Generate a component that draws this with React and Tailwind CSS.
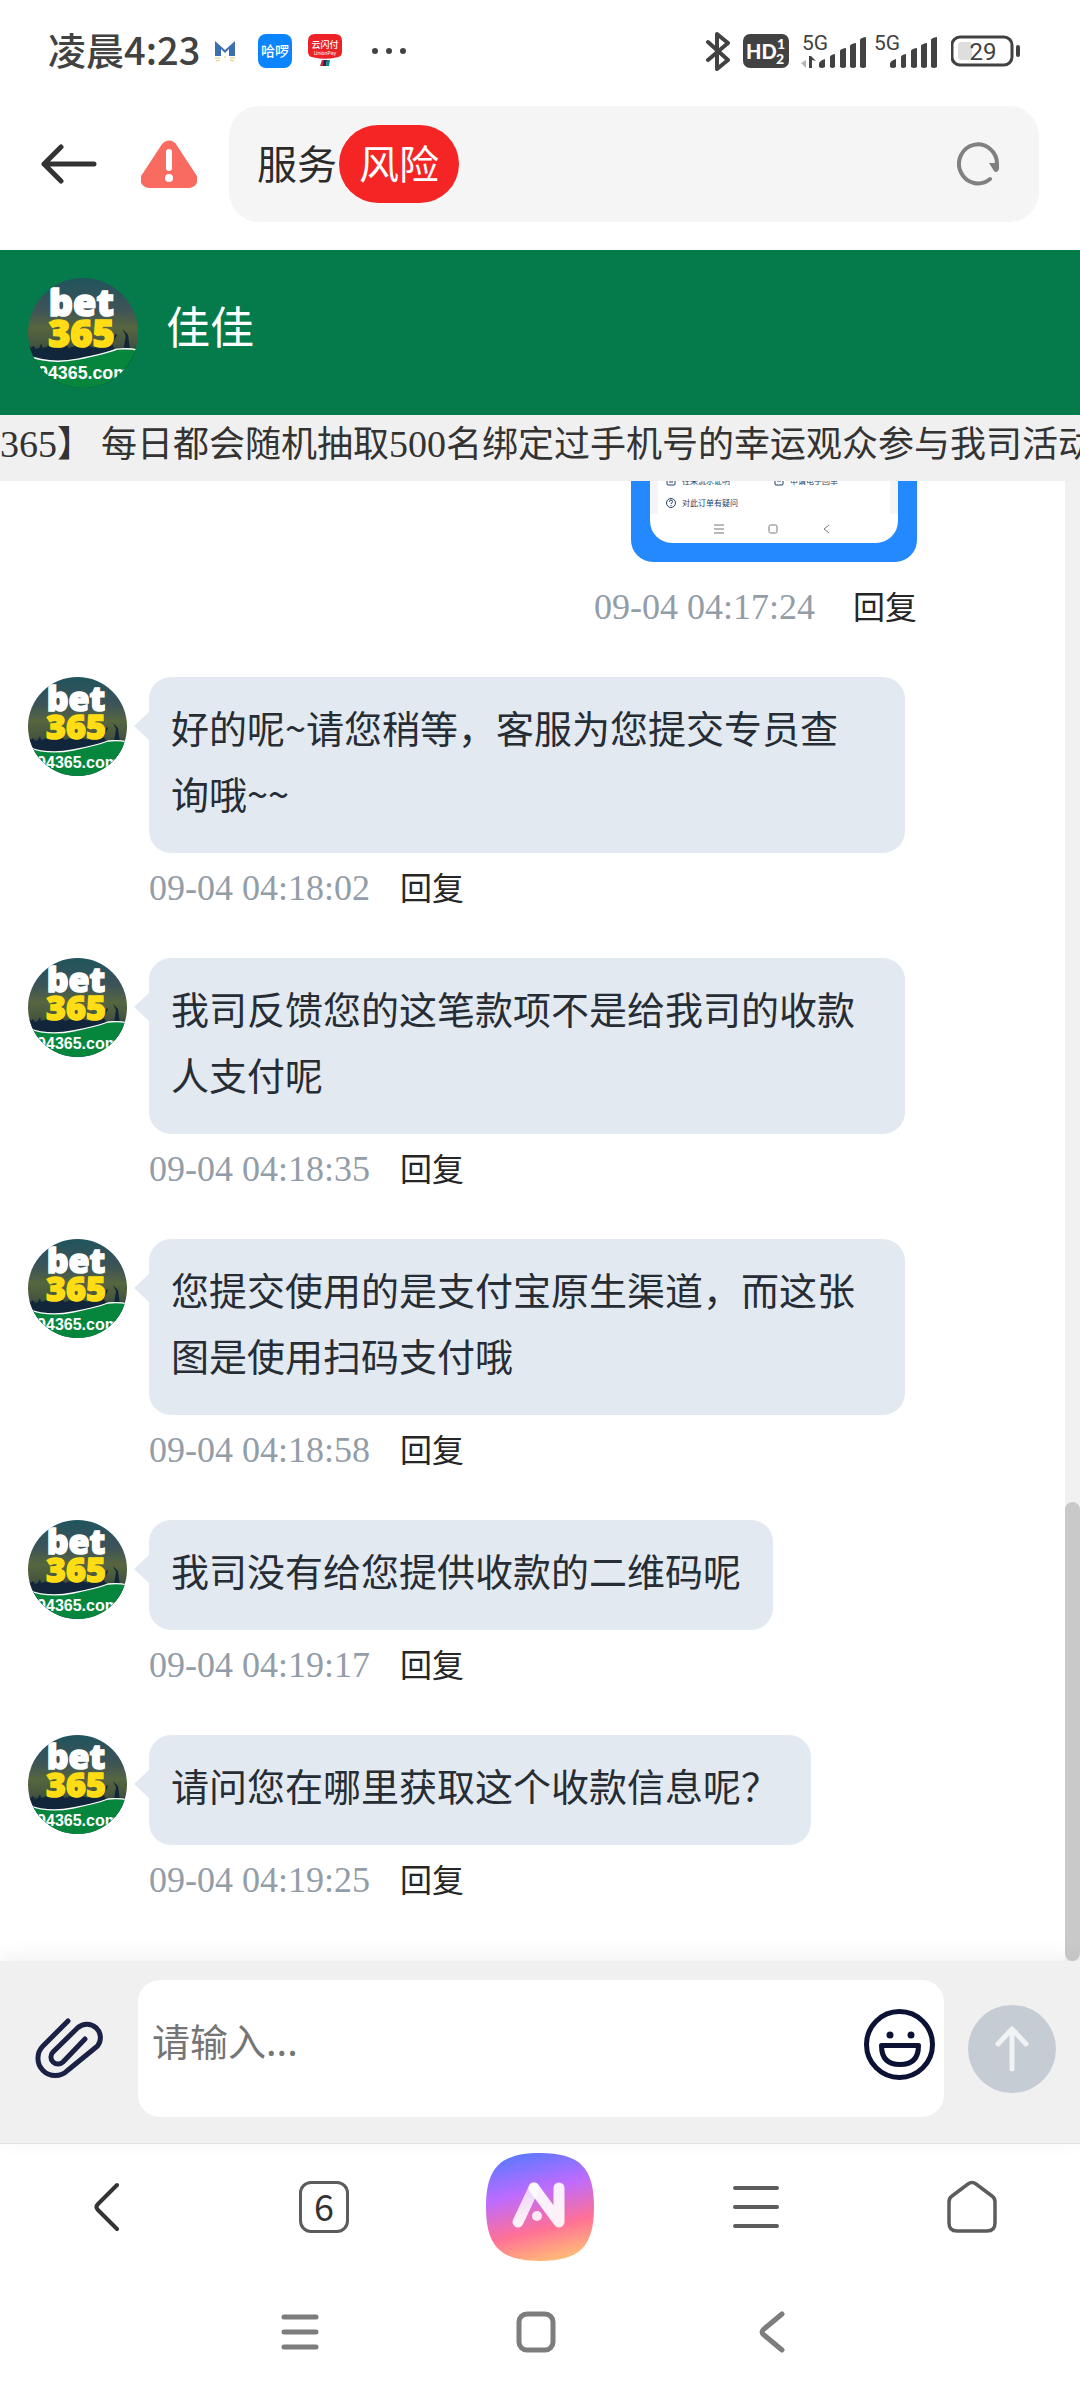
import { useState } from 'react';
import clsx from 'clsx';

const MESSAGES = [
  { id: 1, time: '09-04 04:18:02', text: '好的呢~请您稍等，客服为您提交专员查询哦~~' },
  { id: 2, time: '09-04 04:18:35', text: '我司反馈您的这笔款项不是给我司的收款人支付呢' },
  { id: 3, time: '09-04 04:18:58', text: '您提交使用的是支付宝原生渠道，而这张图是使用扫码支付哦' },
  { id: 4, time: '09-04 04:19:17', text: '我司没有给您提供收款的二维码呢' },
  { id: 5, time: '09-04 04:19:25', text: '请问您在哪里获取这个收款信息呢？' },
];

const SIGNAL_BARS = [
  'M0 30v-3q0-3 6-5v8q-3 2-6 0z',
  'M11 30V20q0-2 5-3v13q-3 2-5 0z',
  'M21 30V14q0-2 6-3v19q-3 2-6 0z',
  'M31 30V9q0-2 6-3v24q-3 2-6 0z',
  'M41 30V3q0-2 6-3v30q-3 2-6 0z',
];

function Signal({ data }) {
  return (
    <svg width={data ? 67 : 63} height="40" viewBox={data ? '0 -4 67 40' : '0 -4 63 40'} fill="#424242">
      <text x={data ? 2 : 0} y="15" fontSize="21" fontFamily="Roboto, sans-serif">5G</text>
      {data && <path d="M6 33l-5-5 5-3z" fill="#b5b5b5" />}
      {data && <path d="M9 21v12h3v-8l4 1-5-5z" />}
      <g transform={data ? 'translate(19 2)' : 'translate(16 2)'}>
        {SIGNAL_BARS.map((d) => <path key={d} d={d} />)}
      </g>
    </svg>
  );
}

function StatusBar() {
  return (
    <div className="flex h-[102px] items-center justify-between pr-[59px] pl-12 text-[#424242]">
      <div className="flex items-center">
        <span className="pb-1 text-[38px] leading-none font-medium">凌晨4:23</span>
        <svg className="ml-[14px]" width="22" height="22" viewBox="0 0 22 22">
          <path d="M1 16V1l10 9 10-9v15h-6V9l-4 4-4-4v7z" fill="#3b6fb0" />
          <path d="M1 18h5M16 18h5M2 21l4-1M20 21l-4-1M10 17h2" stroke="#e3c766" />
        </svg>
        <svg className="ml-[22px]" width="34" height="34" viewBox="0 0 34 34">
          <rect width="34" height="34" rx="8" fill="#0b84ff" />
          <text x="17" y="22" textAnchor="middle" fontSize="14" fontWeight="500" fill="#fff" fontFamily="Noto Sans CJK SC, sans-serif">哈啰</text>
        </svg>
        <svg className="ml-4" width="34" height="34" viewBox="0 0 34 34">
          <path d="M7 0h20q7 0 7 7v11q0 5-6 5.500Q17 26 6 23.500 0 23 0 18V7q0-7 7-7z" fill="#ec2227" />
          <path d="M14 26h5l-2 6h-5z" fill="#c22a3c" />
          <path d="M16 26h3l-1 6h-3z" fill="#1b2c50" />
          <path d="M19 26h3l-1 6h-3z" fill="#0a8a88" />
          <text x="17" y="14" textAnchor="middle" fontSize="9" fontWeight="500" fill="#fff" fontFamily="Noto Sans CJK SC, sans-serif">云闪付</text>
          <text x="17" y="21" textAnchor="middle" fontSize="5" fill="#fff" fontFamily="Inter, sans-serif">UnionPay</text>
        </svg>
        <svg className="ml-[30px]" width="34" height="8" viewBox="0 0 34 8" fill="#424242">
          <circle cx="3" cy="4" r="3" />
          <circle cx="17" cy="4" r="3" />
          <circle cx="31" cy="4" r="3" />
        </svg>
      </div>
      <div className="flex items-center">
        <svg width="24" height="40" viewBox="0 0 24 40" fill="none" stroke="#424242" strokeWidth="4" strokeLinecap="round" strokeLinejoin="round">
          <path d="M2 11l20 18-11 9V3l11 9L2 29" />
        </svg>
        <svg className="ml-[13px]" width="46" height="34" viewBox="0 0 46 34" fill="#fff" fontFamily="Lato, sans-serif" fontWeight="900">
          <rect width="46" height="34" rx="7" fill="#424242" />
          <text x="3" y="25" fontSize="20">HD</text>
          <text x="34" y="15" fontSize="14">1</text>
          <text x="33" y="30" fontSize="14">2</text>
        </svg>
        <span className="ml-[11px] flex gap-[7px]">
          <Signal data />
          <Signal />
        </span>
        <svg className="ml-[14px]" width="70" height="32" viewBox="0 0 70 32">
          <rect x="1" y="2" width="60" height="28" rx="8" fill="none" stroke="#424242" strokeWidth="3" />
          <rect x="7" y="7" width="14" height="18" rx="3" fill="#dedede" />
          <path d="M67 12v8" stroke="#424242" strokeWidth="4" strokeLinecap="round" />
          <text x="32" y="25" textAnchor="middle" fontSize="24" fill="#424242" fontFamily="Roboto, sans-serif">29</text>
        </svg>
      </div>
    </div>
  );
}

function AddressBar() {
  return (
    <div className="flex items-center pt-1 pr-[41px] pb-7 pl-[41px]">
      <button type="button" aria-label="返回">
        <svg width="56" height="40" viewBox="0 0 56 40" fill="none" stroke="#333" strokeWidth="5" strokeLinecap="round" strokeLinejoin="round">
          <path d="M20 3L3 20l17 17M3 20h50" />
        </svg>
      </button>
      <svg className="ml-11" width="56" height="48" viewBox="0 0 56 48">
        <path d="M28 9L48 39.500H8z" fill="#f96b61" stroke="#f96b61" strokeWidth="17" strokeLinejoin="round" />
        <path d="M28 12v16" stroke="#fff" strokeWidth="6" strokeLinecap="round" />
        <circle cx="28" cy="38" r="4" fill="#fff" />
      </svg>
      <div className="ml-8 flex h-[116px] flex-1 items-center justify-between rounded-[30px] bg-[#f5f5f5] pr-10 pl-7">
        <div className="flex items-center gap-[2px] text-[40px] leading-none text-[#2b2b2b]">
          <span className="pb-1">服务</span>
          <span className="rounded-full bg-[#f52525] px-5 pt-[17px] pb-[21px] text-white">风险</span>
        </div>
        <button type="button" aria-label="刷新">
          <svg width="42" height="44" viewBox="0 0 42 44" fill="none">
            <path d="M33 37A19 19.500 0 1 1 40 22" stroke="#808080" strokeWidth="4" strokeLinecap="round" />
            <path d="M32 21h10v6q-2 5-5 2z" fill="#808080" />
          </svg>
        </button>
      </div>
    </div>
  );
}

function Avatar({ id, className }) {
  return (
    <svg className={clsx('shrink-0', className)} viewBox="0 0 99 99">
      <defs>
        <clipPath id={`clip-${id}`}>
          <circle cx="49.500" cy="49.500" r="49.500" />
        </clipPath>
        <linearGradient id={`sky-${id}`} x1="0" y1="0" x2="0" y2="1">
          <stop offset="0" stopColor="#20545d" />
          <stop offset="0.280" stopColor="#3d5358" />
          <stop offset="0.450" stopColor="#56663f" />
          <stop offset="0.600" stopColor="#46563f" />
          <stop offset="0.720" stopColor="#1c3048" />
        </linearGradient>
      </defs>
      <g clipPath={`url(#clip-${id})`}>
        <rect width="99" height="99" fill={`url(#sky-${id})`} />
        <path
          d="M0 80V60l3 3 2-2 2 3 3-1 2-4 1 4 4-1 2-3 2 4 4-2 3 2 5-3 4 3 6-2 6 2 5-2 6 2 4-3 5 3 4-2 1-3 5-8 1 1-4 9 2 4 8 0 2-12-3-6 5 5 2 15 3 3v20z"
          fill="#12263b"
        />
        <path d="M0 70Q20 78 45 73T80 64q12-1 19 1v34H0z" fill="#06863c" />
        <path d="M0 70Q20 78 45 73T80 64q12-1 19 1" fill="none" stroke="#fff" strokeWidth="1.300" />
        <text x="48" y="34" textAnchor="middle" fontSize="34" fontWeight="900" fill="#fff" stroke="#fff" strokeWidth="1.500" fontFamily="Noto Sans, sans-serif">bet</text>
        <text x="48" y="62" textAnchor="middle" fontSize="34" fontWeight="900" fill="#ffdc14" stroke="#ffdc14" strokeWidth="1.500" fontFamily="Noto Sans, sans-serif">365</text>
        <text x="50" y="91" textAnchor="middle" fontSize="16" fontWeight="700" fill="#fff" fontFamily="Liberation Sans, sans-serif">94365.com</text>
      </g>
    </svg>
  );
}

function Meta({ time, className }) {
  return (
    <div className={clsx('flex h-[54px] items-center', className)}>
      <time className="font-['Liberation_Serif','Noto_Sans_CJK_SC',serif] text-[36px] leading-none text-[#929da8]">{time}</time>
      <button type="button" className="pb-1 text-[32px] leading-none text-[#262626]">回复</button>
    </div>
  );
}

function OrderShot() {
  return (
    <div className="w-[286px] rounded-b-[22px] bg-[#2489ff] px-[19px] pb-[19px] text-[8px] text-[#213f6b]">
      <div className="overflow-hidden rounded-b-[22px] bg-white">
        <div className="-mt-[11px] grid grid-cols-[108px_1fr] border-x-8 border-[#f5f5f5] pl-2">
          <span className="flex h-[22px] items-center gap-[6px]">
            <svg width="10" height="10" viewBox="0 0 10 10" fill="none" stroke="currentColor"><rect x="1" y="1" width="8" height="8" rx="1" /><path d="M3 4h4M3 6h4" /></svg>
            往来流水证明
          </span>
          <span className="flex h-[22px] items-center gap-[6px]">
            <svg width="10" height="10" viewBox="0 0 10 10" fill="none" stroke="currentColor"><rect x="1" y="1" width="8" height="8" rx="1" /><path d="M3 5h4" /></svg>
            申请电子回单
          </span>
          <span className="flex h-[22px] items-center gap-[6px]">
            <svg width="10" height="10" viewBox="0 0 10 10" fill="none" stroke="currentColor"><circle cx="5" cy="5" r="4.500" /><path d="M3.500 4q0-2 1.500-2t1.500 1.500T5 5.500V6M5 7v1" /></svg>
            对此订单有疑问
          </span>
        </div>
        <div className="flex h-[29px] items-center justify-center gap-11 pr-[3px]">
          <svg width="10" height="10" viewBox="0 0 10 10" stroke="#777"><path d="M0 1h10M0 5h10M0 9h10" /></svg>
          <svg width="10" height="10" viewBox="0 0 10 10" fill="none" stroke="#777"><rect x="1" y="1" width="8" height="8" rx="1.500" /></svg>
          <svg width="10" height="10" viewBox="0 0 10 10" fill="none" stroke="#777"><path d="M7 1L2 5l5 4" /></svg>
        </div>
      </div>
    </div>
  );
}

function Message({ id, text, time }) {
  return (
    <li className="flex items-start gap-[22px]">
      <Avatar id={`m${id}`} className="size-[99px]" />
      <div>
        <div className="relative w-fit max-w-[70vw] rounded-[22px] bg-[#e3e9f1] pt-[17px] pr-8 pb-[27px] pl-[22px] text-[38px] leading-[66px] text-[#262d35]">
          <svg className="absolute top-[34px] -left-[15px]" width="16" height="30" viewBox="0 0 16 30" fill="#e3e9f1">
            <path d="M16 0L0 15l16 15z" />
          </svg>
          {text}
        </div>
        <Meta time={time} className="mt-2 gap-[30px]" />
      </div>
    </li>
  );
}

function Composer() {
  const [draft, setDraft] = useState('');

  return (
    <form
      className="relative flex items-center border-b border-[#dfe3e3] bg-[#f0f0f0] pt-[19px] pr-6 pb-[26px] pl-[35px] shadow-[0_-4px_20px_rgba(0,0,0,0.06)]"
      onSubmit={(e) => e.preventDefault()}
    >
      <button type="button" aria-label="附件">
        <svg width="69" height="62" viewBox="0 0 69 62" fill="none" stroke="#1b2145" strokeWidth="5" strokeLinecap="round" strokeLinejoin="round">
          <path d="M33 3L8 28A17 17 0 0 0 32.500 52.500L62.500 28A13.500 13.500 0 0 0 43 9.500L18 34A7 7 0 0 0 28 44L50 21" />
        </svg>
      </button>
      <div className="mr-6 ml-[34px] flex flex-1 items-center rounded-[22px] bg-white pr-[9px]">
        <textarea
          aria-label="消息"
          rows={1}
          placeholder="请输入..."
          value={draft}
          onChange={(e) => setDraft(e.target.value)}
          className="h-[137px] min-w-0 flex-1 resize-none px-[14px] pt-8 pb-8 text-[38px] leading-[56px] outline-none placeholder:text-[#757575]"
        />
        <button type="button" aria-label="表情" className="mb-2">
          <svg width="71" height="71" viewBox="0 0 71 71" fill="none" stroke="#0b1233" strokeWidth="5">
            <circle cx="35.500" cy="35.500" r="33" />
            <path d="M17.500 36.500h37q0 19-18.500 19t-18.500-19z" strokeLinejoin="round" />
            <circle cx="26" cy="26" r="3.500" fill="#0b1233" stroke="none" />
            <circle cx="47" cy="26" r="3.500" fill="#0b1233" stroke="none" />
          </svg>
        </button>
      </div>
      <button type="submit" aria-label="发送" className="flex size-[88px] items-center justify-center rounded-full bg-[#c5ccd4]">
        <svg width="34" height="46" viewBox="0 0 34 46" fill="none" stroke="#f0f2f4" strokeWidth="5" strokeLinecap="round" strokeLinejoin="round">
          <path d="M17 43V3M3 18L17 3l14 15" />
        </svg>
      </button>
    </form>
  );
}

function BrowserNav() {
  return (
    <nav className="grid h-[126px] grid-cols-5 place-items-center">
      <button type="button" aria-label="后退">
        <svg width="30" height="50" viewBox="0 0 30 50" fill="none" stroke="#333" strokeWidth="4" strokeLinecap="round" strokeLinejoin="round">
          <path d="M24 3L5 22q-3 3 0 6l19 19" />
        </svg>
      </button>
      <button type="button" className="flex h-[52px] w-[50px] items-center justify-center rounded-[12px] border-[3px] border-[#5c5c5c] pb-1 text-[36px] leading-none text-[#333]">
        6
      </button>
      <button type="button" aria-label="AI">
        <svg width="108" height="108" viewBox="0 0 108 108" fill="none">
          <defs>
            <linearGradient id="ai-bg" x1="0.350" y1="0" x2="0.600" y2="1">
              <stop offset="0" stopColor="#5f78ff" />
              <stop offset="0.350" stopColor="#bd6bff" />
              <stop offset="0.700" stopColor="#ff7096" />
              <stop offset="1" stopColor="#ffba78" />
            </linearGradient>
            <linearGradient id="ai-leg" x1="0" y1="1" x2="0" y2="0">
              <stop offset="0" stopColor="#fff" stopOpacity="0.900" />
              <stop offset="1" stopColor="#fff" stopOpacity="0.700" />
            </linearGradient>
          </defs>
          <path d="M54 0C94 0 108 15 108 54s-14 54-54 54S0 93 0 54 14 0 54 0z" fill="url(#ai-bg)" />
          <path d="M32 69L48 35" stroke="url(#ai-leg)" strokeWidth="11" strokeLinecap="round" />
          <path d="M48 35l25 34V35" stroke="#fff" strokeOpacity="0.900" strokeWidth="11" strokeLinecap="round" strokeLinejoin="round" />
          <circle cx="51" cy="63" r="5" fill="#fff" fillOpacity="0.850" />
        </svg>
      </button>
      <button type="button" aria-label="菜单">
        <svg width="46" height="44" viewBox="0 0 46 44" stroke="#5c5c5c" strokeWidth="4" strokeLinecap="round">
          <path d="M2 3h42M2 22h42M2 41h42" />
        </svg>
      </button>
      <button type="button" aria-label="主页">
        <svg width="50" height="54" viewBox="0 0 50 54" fill="none" stroke="#5c5c5c" strokeWidth="3.500" strokeLinejoin="round">
          <path d="M21 4q4-3 8 0l16 12q3 2 3 6v21q0 8-8 8H10q-8 0-8-8V22q0-4 3-6z" />
        </svg>
      </button>
    </nav>
  );
}

function SystemNav() {
  return (
    <nav className="flex h-[130px] items-center justify-center pr-[10px] pb-[6px]">
      <button type="button" aria-label="最近任务">
        <svg width="38" height="38" viewBox="0 0 38 38" stroke="#7d7d7d" strokeWidth="5" strokeLinecap="round">
          <path d="M3 4h32M3 19h32M3 34h32" />
        </svg>
      </button>
      <button type="button" aria-label="桌面" className="mr-[203px] ml-[197px]">
        <svg width="40" height="42" viewBox="0 0 40 42" fill="none" stroke="#7d7d7d" strokeWidth="5">
          <rect x="3" y="3" width="34" height="36" rx="8" />
        </svg>
      </button>
      <button type="button" aria-label="上一页">
        <svg width="30" height="42" viewBox="0 0 30 42" fill="none" stroke="#7d7d7d" strokeWidth="5" strokeLinecap="round" strokeLinejoin="round">
          <path d="M23 3L5 18q-4 3 0 6l18 15" />
        </svg>
      </button>
    </nav>
  );
}

export default function App() {
  return (
    <div className="flex min-h-screen flex-col overflow-hidden bg-white font-['Noto_Sans_CJK_SC',sans-serif]">
      <StatusBar />
      <AddressBar />

      <header className="flex h-[165px] items-center gap-7 bg-[#057a4a] px-7">
        <Avatar id="header" className="size-[110px]" />
        <h1 className="pb-4 text-[44px] leading-none text-white">佳佳</h1>
      </header>

      <p className="h-[66px] overflow-hidden bg-[#f0f0f0] text-[36px] leading-[52px] whitespace-nowrap text-[#333]">
        <span className="font-['Liberation_Serif',serif] text-[38px]">365</span>】
        <span className="ml-2">每日都会随机抽取</span>
        <span className="font-['Liberation_Serif',serif] text-[38px]">500</span>名绑定过手机号的幸运观众参与我司活动
      </p>

      <main className="flex flex-1">
        <div className="flex-1 pb-[47px]">
          <div className="mb-[43px] flex flex-col items-end pr-[148px]">
            <OrderShot />
            <Meta time="09-04 04:17:24" className="mt-[18px] gap-[38px]" />
          </div>
          <ul className="flex flex-col gap-[43px] pl-7">
            {MESSAGES.map((m) => <Message key={m.id} {...m} />)}
          </ul>
        </div>
        <div className="flex w-[15px] flex-col justify-end bg-[#f1f1f1]">
          <div className="h-[31%] rounded-full bg-[#c9c9c9]" />
        </div>
      </main>

      <Composer />
      <BrowserNav />
      <SystemNav />
    </div>
  );
}
